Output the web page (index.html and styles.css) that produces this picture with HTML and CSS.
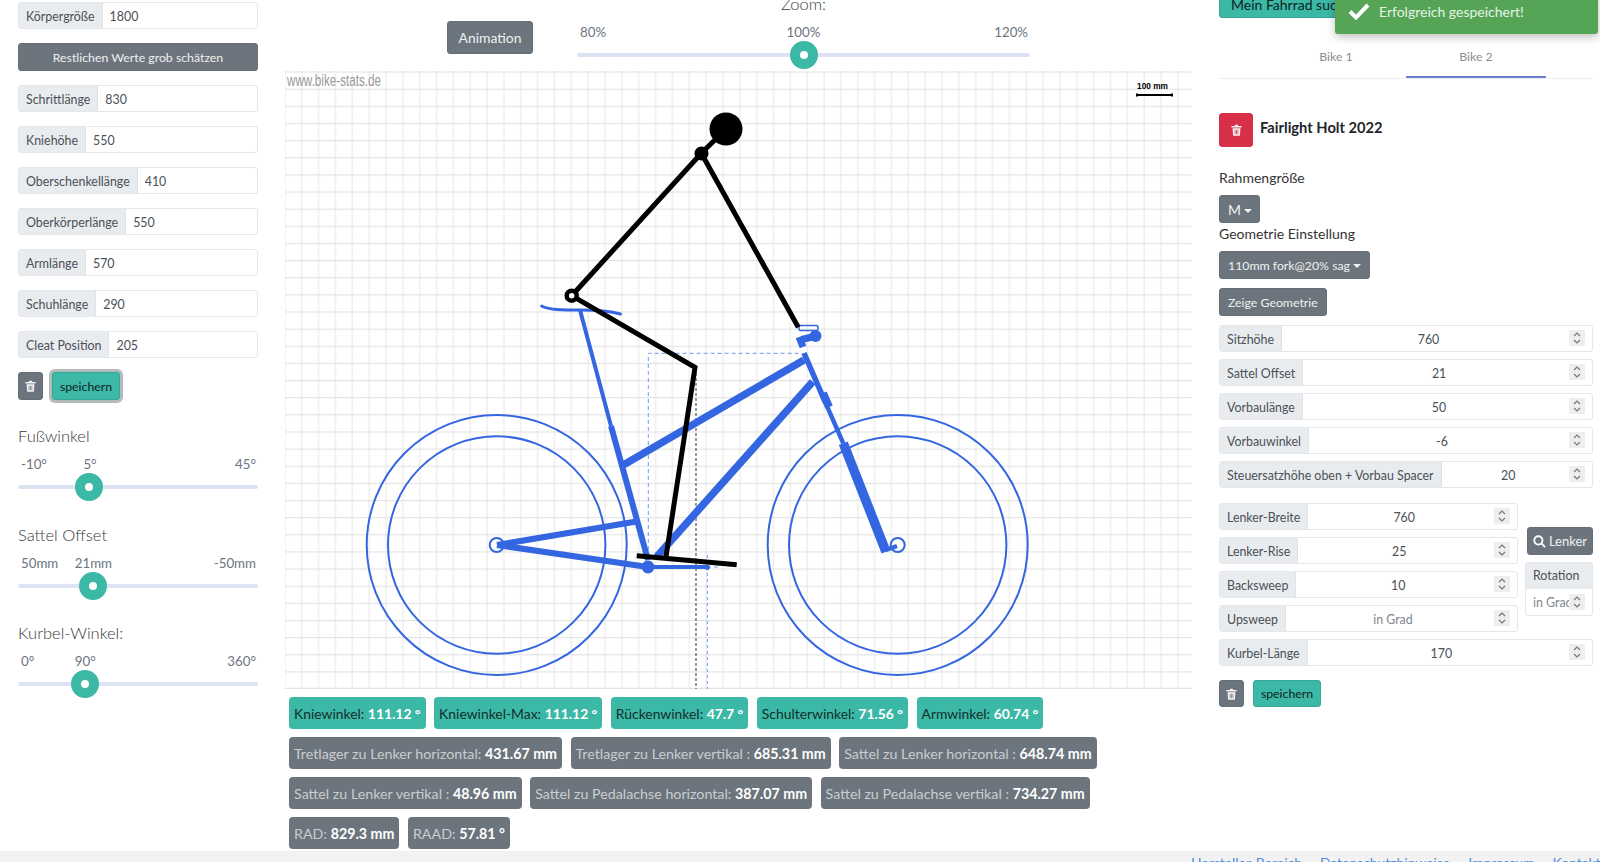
FILE: index.html
```html
<!DOCTYPE html>
<html lang="de">
<head>
    <meta charset="UTF-8">
    <title>Bike Stats</title>
    <link rel="stylesheet" href="styles.css">
</head>
<body>
<svg class="defs" width="0" height="0">
    <symbol id="trash" viewBox="0 0 14 16">
        <path d="M1 2.5h3.6l.8-1.5h3.2l.8 1.5H13a.7.7 0 0 1 0 2.2H1a.7.7 0 0 1 0-2.2z"/>
        <path fill-rule="evenodd" d="M1.8 5.5h10.4l-.6 9a1.4 1.4 0 0 1-1.4 1.3H3.8a1.4 1.4 0 0 1-1.4-1.3zM4.6 7.5v6h1v-6zM6.5 7.5v6h1v-6zM8.4 7.5v6h1v-6z"/>
    </symbol>
    <symbol id="spin" viewBox="0 0 16 16">
        <rect width="16" height="16" fill="#eeeeee"/>
        <path d="M5 6l3-3 3 3M5 10l3 3 3-3" fill="none" stroke="#777" stroke-width="1.2"/>
    </symbol>
</svg>

<div class="page">
    <!-- linke spalte -->
    <div class="col-left">
        <div class="group"><span class="group-label">Körpergröße</span><input class="group-input" value="1800"></div>
        <button class="btn btn-grey btn-wide">Restlichen Werte grob schätzen</button>
        <div class="group"><span class="group-label">Schrittlänge</span><input class="group-input" value="830"></div>
        <div class="group"><span class="group-label">Kniehöhe</span><input class="group-input" value="550"></div>
        <div class="group"><span class="group-label">Oberschenkellänge</span><input class="group-input" value="410"></div>
        <div class="group"><span class="group-label">Oberkörperlänge</span><input class="group-input" value="550"></div>
        <div class="group"><span class="group-label">Armlänge</span><input class="group-input" value="570"></div>
        <div class="group"><span class="group-label">Schuhlänge</span><input class="group-input" value="290"></div>
        <div class="group"><span class="group-label">Cleat Position</span><input class="group-input" value="205"></div>
        <div class="actions">
            <button class="btn btn-grey btn-icon"><svg class="icon"><use href="#trash"/></svg></button>
            <button class="btn btn-teal btn-focus">speichern</button>
        </div>

        <div class="slider slider-first">
            <h4 class="slider-title">Fußwinkel</h4>
            <div class="slider-labels"><span>-10°</span><span class="slider-cur" style="left: 30%">5°</span><span>45°</span></div>
            <div class="track"><span class="thumb" style="left: 29.7%"></span></div>
        </div>
        <div class="slider">
            <h4 class="slider-title">Sattel Offset</h4>
            <div class="slider-labels"><span>50mm</span><span class="slider-cur" style="left: 31.4%">21mm</span><span>-50mm</span></div>
            <div class="track"><span class="thumb" style="left: 31.25%"></span></div>
        </div>
        <div class="slider">
            <h4 class="slider-title">Kurbel-Winkel:</h4>
            <div class="slider-labels"><span>0°</span><span class="slider-cur" style="left: 28%">90°</span><span>360°</span></div>
            <div class="track"><span class="thumb" style="left: 28.1%"></span></div>
        </div>
    </div>

    <!-- mitte -->
    <div class="col-mid">
        <div class="zoom-bar">
            <button class="btn btn-grey btn-anim">Animation</button>
            <div class="zoom-slider">
                <h4 class="slider-title zoom-title">Zoom:</h4>
                <div class="slider-labels"><span>80%</span><span class="slider-cur" style="left: 50%">100%</span><span>120%</span></div>
                <div class="track"><span class="thumb" style="left: 50%"></span></div>
            </div>
        </div>

        <svg class="sketch" viewBox="285 71 907 618" width="907" height="618">
            <defs>
                <pattern id="grid" patternUnits="userSpaceOnUse" x="285.7" y="71.5" width="16.85" height="17.14">
                    <path d="M16.1 0v17.14" stroke="#efefef" stroke-width="1.6"/>
                    <path d="M0 0h16.85" stroke="#e2e2e2" stroke-width="2.2"/>
                </pattern>
            </defs>
            <rect x="285" y="71" width="907" height="618" fill="url(#grid)"/>
            <path d="M285 688.5h907" stroke="#e2e2e2" stroke-width="1.5"/>
            <text class="sk-url" x="287" y="86" textLength="94" lengthAdjust="spacingAndGlyphs">www.bike-stats.de</text>
            <text class="sk-scale" x="1137" y="89" textLength="31" lengthAdjust="spacingAndGlyphs">100 mm</text>
            <path d="M1137 95h35M1137 93.5v3M1172 93.5v3" stroke="#000" stroke-width="2" fill="none"/>

            <!-- hilfslinien -->
            <g fill="none" stroke="#6f9cf0" stroke-width="1" stroke-dasharray="4 3">
                <path d="M648.3 557V353.3H802"/>
                <path d="M707.3 555V689" stroke-dasharray="3 3"/>
                <path d="M707 567h14"/>
            </g>
            <path d="M696 368V689" fill="none" stroke="#555" stroke-width="1.2" stroke-dasharray="3 2"/>

            <!-- fahrrad -->
            <g fill="none" stroke="#3366e0">
                <circle cx="496.7" cy="545" r="130" stroke-width="2"/>
                <circle cx="496.7" cy="545" r="108.7" stroke-width="2"/>
                <circle cx="897.7" cy="545" r="130" stroke-width="2"/>
                <circle cx="897.7" cy="545" r="108.7" stroke-width="2"/>
                <circle cx="496.7" cy="545" r="7" stroke-width="2"/>
                <circle cx="897.7" cy="545" r="7" stroke-width="2"/>
                <path d="M497 545L635 521.7" stroke-width="6"/>
                <path d="M497 545L648 567" stroke-width="6"/>
                <path d="M648 567H707" stroke-width="4"/>
                <path d="M623.3 465L804 360" stroke-width="7.5"/>
                <path d="M656.7 556.7L812.7 381.7" stroke-width="7.5"/>
                <path d="M580 310L611 426" stroke-width="4"/>
                <path d="M611 426L648 560" stroke-width="6"/>
                <path d="M804 353L825 401.7" stroke-width="5.5"/>
                <path d="M823 393L829 407" stroke-width="8"/>
                <path d="M825 401.7L843.3 443.3" stroke-width="4.5"/>
                <path d="M843.3 443.3L886 551.7" stroke-width="9.5"/>
                <path d="M886 550L897 546" stroke-width="4.5"/>
                <path d="M541.7 306C550 311 570 310 580 310S610 311 620.5 314" stroke-width="3" stroke-linecap="round"/>
                <rect x="799" y="325.5" width="19" height="5" rx="1.5" stroke-width="1.5"/>
                <path d="M799 337L803 347" stroke-width="7"/>
                <path d="M802 339.5L816 336" stroke-width="7"/>
            </g>
            <g fill="#3366e0">
                <circle cx="648" cy="567" r="6.5"/>
                <circle cx="707.3" cy="567.3" r="2.6"/>
                <circle cx="815.5" cy="336" r="6"/>
            </g>

            <!-- fahrer -->
            <g fill="none" stroke="#000" stroke-width="5">
                <path d="M726 129L701.3 153.3L571.7 295.7L695 367.3L666 556.7"/>
                <path d="M701.3 153.3L798.3 327.3"/>
                <path d="M636.7 555.7L736.7 564.7"/>
            </g>
            <circle cx="726" cy="129" r="16.5"/>
            <circle cx="701.5" cy="153.5" r="7"/>
            <circle cx="571.7" cy="295.7" r="5" fill="#fff" stroke="#000" stroke-width="4.5"/>
        </svg>

        <div class="badges">
            <span class="badge badge-teal">Kniewinkel: <b>111.12 °</b></span>
            <span class="badge badge-teal">Kniewinkel-Max: <b>111.12 °</b></span>
            <span class="badge badge-teal">Rückenwinkel: <b>47.7 °</b></span>
            <span class="badge badge-teal">Schulterwinkel: <b>71.56 °</b></span>
            <span class="badge badge-teal">Armwinkel: <b>60.74 °</b></span>
            <span class="badge badge-grey">Tretlager zu Lenker horizontal: <b>431.67 mm</b></span>
            <span class="badge badge-grey">Tretlager zu Lenker vertikal : <b>685.31 mm</b></span>
            <span class="badge badge-grey">Sattel zu Lenker horizontal : <b>648.74 mm</b></span>
            <span class="badge badge-grey">Sattel zu Lenker vertikal : <b>48.96 mm</b></span>
            <span class="badge badge-grey">Sattel zu Pedalachse horizontal: <b>387.07 mm</b></span>
            <span class="badge badge-grey">Sattel zu Pedalachse vertikal : <b>734.27 mm</b></span>
            <span class="badge badge-grey">RAD: <b>829.3 mm</b></span>
            <span class="badge badge-grey">RAAD: <b>57.81 °</b></span>
        </div>
    </div>

    <!-- rechte spalte -->
    <div class="col-right">
        <button class="btn btn-teal btn-search">Mein Fahrrad suchen</button>
        <div class="tabs">
            <div class="tab">Bike 1</div>
            <div class="tab tab-on">Bike 2</div>
        </div>
        <div class="bike-head">
            <button class="btn btn-red"><svg class="icon"><use href="#trash"/></svg></button>
            <strong class="bike-name">Fairlight Holt 2022</strong>
        </div>
        <div class="field-label field-label-first">Rahmengröße</div>
        <button class="btn btn-grey btn-drop btn-size">M<i class="caret"></i></button>
        <div class="field-label">Geometrie Einstellung</div>
        <button class="btn btn-grey btn-drop">110mm fork@20% sag<i class="caret"></i></button>
        <button class="btn btn-grey btn-geo">Zeige Geometrie</button>

        <div class="stack">
            <div class="group"><span class="group-label">Sitzhöhe</span><input class="group-input num" value="760"><svg class="spin"><use href="#spin"/></svg></div>
            <div class="group"><span class="group-label">Sattel Offset</span><input class="group-input num" value="21"><svg class="spin"><use href="#spin"/></svg></div>
            <div class="group"><span class="group-label">Vorbaulänge</span><input class="group-input num" value="50"><svg class="spin"><use href="#spin"/></svg></div>
            <div class="group"><span class="group-label">Vorbauwinkel</span><input class="group-input num" value="-6"><svg class="spin"><use href="#spin"/></svg></div>
            <div class="group"><span class="group-label">Steuersatzhöhe oben + Vorbau Spacer</span><input class="group-input num" value="20"><svg class="spin"><use href="#spin"/></svg></div>
        </div>

        <div class="bar-row">
            <div class="stack bar-fields">
                <div class="group"><span class="group-label">Lenker-Breite</span><input class="group-input num" value="760"><svg class="spin"><use href="#spin"/></svg></div>
                <div class="group"><span class="group-label">Lenker-Rise</span><input class="group-input num" value="25"><svg class="spin"><use href="#spin"/></svg></div>
                <div class="group"><span class="group-label">Backsweep</span><input class="group-input num" value="10"><svg class="spin"><use href="#spin"/></svg></div>
                <div class="group"><span class="group-label">Upsweep</span><input class="group-input num" placeholder="in Grad"><svg class="spin"><use href="#spin"/></svg></div>
            </div>
            <div class="bar-side">
                <button class="btn btn-grey btn-lenker">
                    <svg class="search" viewBox="0 0 14 14"><circle cx="5.8" cy="5.8" r="4.4"/><path d="M9 9l4 4"/></svg>Lenker
                </button>
                <div class="rotation">
                    <div class="rotation-head">Rotation</div>
                    <div class="rotation-body">
                        <input class="rotation-input" placeholder="in Grad"><svg class="spin"><use href="#spin"/></svg>
                    </div>
                </div>
            </div>
        </div>

        <div class="stack stack-last">
            <div class="group"><span class="group-label">Kurbel-Länge</span><input class="group-input num" value="170"><svg class="spin"><use href="#spin"/></svg></div>
        </div>
        <div class="actions actions-right">
            <button class="btn btn-grey btn-icon"><svg class="icon"><use href="#trash"/></svg></button>
            <button class="btn btn-teal">speichern</button>
        </div>
    </div>
</div>

<div class="toast">
    <svg class="toast-check" viewBox="0 0 22 18"><path d="M2 9.5l6 6L20 3"/></svg>
    <span>Erfolgreich gespeichert!</span>
</div>

<div class="footer">
    <a href="#">Hersteller-Bereich</a>
    <a href="#">Datenschutzhinweise</a>
    <a href="#">Impressum</a>
    <a href="#">Kontakt</a>
</div>
</body>
</html>
```

FILE: styles.css
```css
* {
    box-sizing: border-box;
}
html, body {
    margin: 0;
    height: 862px;
    overflow: hidden;
}
body {
    font-family: Lato, "Open Sans", sans-serif;
    font-size: 12.4px;
    color: #212529;
    background: #fff;
    position: relative;
}
.defs {
    position: absolute;
}
.page {
    display: grid;
    grid-template-columns: 240px 907px 374px;
    column-gap: 27px;
    padding-left: 18px;
    height: 851px;
    overflow: hidden;
}

/* buttons */
.btn {
    display: block;
    font-family: inherit;
    font-size: 12.3px;
    height: 28px;
    padding: 0 8px;
    border: 1px solid transparent;
    border-radius: 3px;
    cursor: pointer;
}
.btn-grey {
    background: #6c757d;
    border-color: #666f77;
    color: #f0f0f0;
}
.btn-teal {
    background: #3cb8a6;
    border-color: #35a795;
    color: #10231f;
}
.btn-focus {
    box-shadow: 0 0 0 3px #b5babd;
    width: 68px;
    padding: 0;
}
.btn-wide {
    width: 100%;
}
.btn-icon {
    width: 25px;
    padding: 0;
}
.btn-red {
    width: 34px;
    height: 34px;
    padding: 0;
    background: #d9304a;
    border-color: #d9304a;
    color: #fff;
}
.icon {
    display: block;
    margin: 0 auto;
    width: 11px;
    height: 12px;
    fill: #f4f4f4;
}

/* input groups */
.group {
    display: flex;
    position: relative;
    height: 27px;
    border: 1px solid #e3e6ea;
    border-radius: 3px;
    background: #fff;
}
.group-label {
    display: flex;
    align-items: center;
    padding: 1px 7px 0;
    background: #e9ecef;
    color: #495057;
    white-space: nowrap;
    border-right: 1px solid #dfe3e7;
}
.group-input {
    flex: 1;
    min-width: 0;
    border: 0;
    outline: 0;
    background: transparent;
    font: inherit;
    color: #495057;
    padding: 1px 7px 0;
}
.num {
    text-align: center;
    padding-right: 24px;
}
.group-input::placeholder, .rotation-input::placeholder {
    color: #80878e;
    opacity: 1;
}
.spin {
    position: absolute;
    right: 7px;
    top: 4px;
    width: 16px;
    height: 16px;
}

/* linke spalte */
.col-left {
    display: flex;
    flex-direction: column;
    gap: 14px;
    padding-top: 2px;
}
.actions {
    display: flex;
    gap: 9px;
}
.slider {
    margin-top: 9.5px;
}
.slider-first {
    margin-top: 12px;
}
.slider-title {
    margin: 0;
    font-size: 16.5px;
    font-weight: 300;
    line-height: 20px;
    color: #343a40;
}
.slider-labels {
    display: flex;
    justify-content: space-between;
    position: relative;
    padding: 0 2px 0 3px;
    margin-top: 9px;
    line-height: 18px;
    font-size: 13.3px;
    color: #6c7480;
}
.slider-cur {
    position: absolute;
    transform: translateX(-50%);
}
.track {
    position: relative;
    height: 4px;
    margin-top: 12px;
    margin-bottom: 12px;
    border-radius: 2px;
    background: #dde3f3;
}
.thumb {
    position: absolute;
    top: 2px;
    width: 28px;
    height: 28px;
    margin: -14px 0 0 -14px;
    border-radius: 50%;
    background: #fff;
    border: 10.5px solid #3cb8a6;
}

/* mitte */
.zoom-bar {
    display: flex;
    height: 71px;
    padding-left: 162px;
    gap: 44px;
}
.btn-anim {
    height: 33px;
    margin-top: 21px;
    width: 86px;
    padding: 0;
    font-size: 13.9px;
}
.zoom-slider {
    width: 453px;
}
.zoom-title {
    margin-top: -6px;
    text-align: center;
}
.sketch {
    display: block;
}
.sk-url {
    font-family: "Liberation Sans", sans-serif;
    font-size: 16px;
    fill: #999;
}
.sk-scale {
    font-family: "Liberation Sans", sans-serif;
    font-size: 9px;
    font-weight: bold;
    fill: #000;
}
.badges {
    display: flex;
    flex-wrap: wrap;
    gap: 8px 8.5px;
    padding: 8px 0 0 4px;
}
.badge {
    display: flex;
    align-items: center;
    height: 32px;
    padding: 0 5px;
    border-radius: 4px;
    font-size: 14.25px;
    white-space: pre;
}
.badge b {
    color: #fff;
}
.badge-teal {
    background: #3cb8a6;
    color: #12302b;
    font-size: 13.9px;
}
.badge-grey {
    background: #6c757d;
    color: #c9cdd0;
}

/* rechte spalte */
.btn-search {
    width: 150px;
    margin-top: -10px;
    padding-left: 11px;
    text-align: left;
    font-size: 14px;
    white-space: nowrap;
}
.tabs {
    display: flex;
    justify-content: center;
    margin-top: 20px;
    border-bottom: 1px solid #eceef0;
}
.tab {
    width: 140px;
    height: 40px;
    line-height: 38px;
    text-align: center;
    font-size: 12.3px;
    color: #8d8d8d;
}
.tab-on {
    border-bottom: 2px solid #6f7fcf;
}
.bike-head {
    display: flex;
    align-items: center;
    gap: 7px;
    margin-top: 34px;
}
.bike-name {
    font-size: 14.7px;
    color: #212529;
    padding-bottom: 6px;
}
.field-label {
    font-size: 14px;
    line-height: 20px;
    margin-top: 1px;
    color: #333;
}
.field-label-first {
    margin-top: 21px;
}
.btn-drop {
    margin-top: 7px;
}
.btn-size {
    width: 41px;
    padding: 0 0 0 1px;
    font-size: 14px;
}
.btn-geo {
    margin-top: 9px;
    margin-bottom: 9px;
}
.caret {
    display: inline-block;
    margin-left: 3px;
    vertical-align: 2px;
    border-top: 4px solid #f0f0f0;
    border-left: 4px solid transparent;
    border-right: 4px solid transparent;
}
.stack {
    display: flex;
    flex-direction: column;
    gap: 7px;
}
.bar-row {
    display: flex;
    margin-top: 15px;
    gap: 7px;
}
.bar-fields {
    width: 299px;
}
.bar-side {
    width: 68px;
    padding-top: 24px;
}
.btn-lenker {
    width: 66px;
    margin-left: 2px;
    padding: 0;
    font-size: 13px;
    white-space: nowrap;
}
.search {
    width: 13px;
    height: 13px;
    margin-right: 3px;
    vertical-align: -2px;
    fill: none;
    stroke: #fff;
    stroke-width: 2;
}
.rotation {
    margin-top: 7px;
    border: 1px solid #e3e6ea;
    border-radius: 3px;
}
.rotation-head {
    height: 26px;
    line-height: 25px;
    padding-left: 7px;
    background: #e9ecef;
    color: #495057;
}
.rotation-body {
    position: relative;
    height: 26px;
}
.rotation-input {
    width: 100%;
    height: 100%;
    border: 0;
    outline: 0;
    background: transparent;
    font: inherit;
    padding: 0 0 0 7px;
}
.rotation-body .spin {
    right: 7px;
    top: 5px;
}
.stack-last {
    margin-top: 7px;
}
.actions-right {
    margin-top: 14px;
}
.actions-right .btn {
    height: 27px;
}
.actions-right .btn-teal {
    width: 68px;
    padding: 0;
}

/* meldung */
.toast {
    position: absolute;
    top: -6px;
    left: 1335px;
    width: 263px;
    height: 40px;
    display: flex;
    align-items: center;
    padding: 0 0 0 13px;
    gap: 9px;
    background: #56a556;
    color: #e6f2e6;
    font-size: 14px;
    border-radius: 3px;
    box-shadow: 0 3px 8px rgba(0, 0, 0, .25);
}
.toast > * {
    position: relative;
    top: -3px;
}
.toast-check {
    width: 22px;
    height: 18px;
    fill: none;
    stroke: #fff;
    stroke-width: 4;
}

/* footer */
.footer {
    display: flex;
    gap: 18px;
    height: 11px;
    padding: 3px 0 0 1191px;
    background: #f2f2f2;
    overflow: hidden;
}
.footer a {
    color: #4d8de0;
    font-size: 13.9px;
    line-height: 18px;
    text-decoration: none;
    white-space: nowrap;
}
```
